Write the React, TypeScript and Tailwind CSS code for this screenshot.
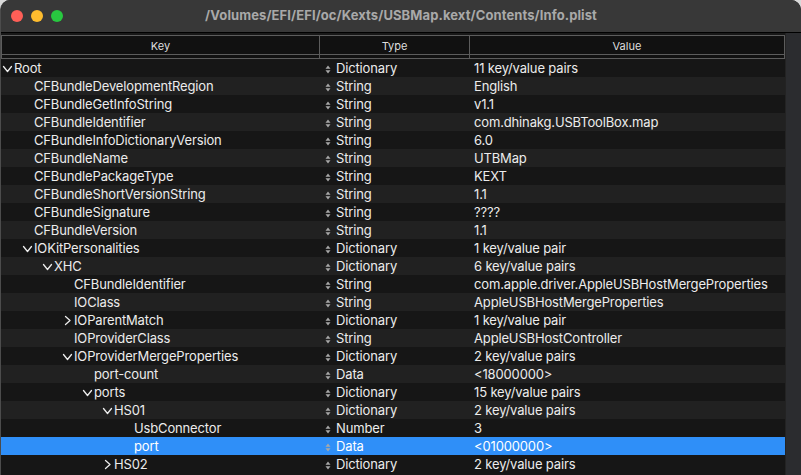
type Row = {
  key: string;
  type: string;
  value: string;
  level: number;
  open?: boolean;
  closed?: boolean;
};

const rows: Row[] = [
  { key: "Root", type: "Dictionary", value: "11 key/value pairs", level: 0, open: true },
  { key: "CFBundleDevelopmentRegion", type: "String", value: "English", level: 1 },
  { key: "CFBundleGetInfoString", type: "String", value: "v1.1", level: 1 },
  { key: "CFBundleIdentifier", type: "String", value: "com.dhinakg.USBToolBox.map", level: 1 },
  { key: "CFBundleInfoDictionaryVersion", type: "String", value: "6.0", level: 1 },
  { key: "CFBundleName", type: "String", value: "UTBMap", level: 1 },
  { key: "CFBundlePackageType", type: "String", value: "KEXT", level: 1 },
  { key: "CFBundleShortVersionString", type: "String", value: "1.1", level: 1 },
  { key: "CFBundleSignature", type: "String", value: "????", level: 1 },
  { key: "CFBundleVersion", type: "String", value: "1.1", level: 1 },
  { key: "IOKitPersonalities", type: "Dictionary", value: "1 key/value pair", level: 1, open: true },
  { key: "XHC", type: "Dictionary", value: "6 key/value pairs", level: 2, open: true },
  { key: "CFBundleIdentifier", type: "String", value: "com.apple.driver.AppleUSBHostMergeProperties", level: 3 },
  { key: "IOClass", type: "String", value: "AppleUSBHostMergeProperties", level: 3 },
  { key: "IOParentMatch", type: "Dictionary", value: "1 key/value pair", level: 3, closed: true },
  { key: "IOProviderClass", type: "String", value: "AppleUSBHostController", level: 3 },
  { key: "IOProviderMergeProperties", type: "Dictionary", value: "2 key/value pairs", level: 3, open: true },
  { key: "port-count", type: "Data", value: "<18000000>", level: 4 },
  { key: "ports", type: "Dictionary", value: "15 key/value pairs", level: 4, open: true },
  { key: "HS01", type: "Dictionary", value: "2 key/value pairs", level: 5, open: true },
  { key: "UsbConnector", type: "Number", value: "3", level: 6 },
  { key: "port", type: "Data", value: "<01000000>", level: 6 },
  { key: "HS02", type: "Dictionary", value: "2 key/value pairs", level: 5, closed: true },
];

// text starts at 14 + 20 * level, minus the 12px disclosure slot and 1px border
const indent = [
  "pl-[1px]",
  "pl-[21px]",
  "pl-[41px]",
  "pl-[61px]",
  "pl-[81px]",
  "pl-[101px]",
  "pl-[121px]",
];

const SELECTED = 21;

function Disclosure({ row }: { row: Row }) {
  if (row.open) {
    return (
      <svg width="12" height="10" viewBox="0 0 12 10" className="shrink-0">
        <path d="M1.5 2.5 L5.5 7.5 L9.5 2.5" fill="none" stroke="#ececec" strokeWidth="1.3" strokeLinecap="round" strokeLinejoin="round" />
      </svg>
    );
  }
  if (row.closed) {
    return (
      <svg width="12" height="12" viewBox="0 0 12 12" className="shrink-0">
        <path d="M3.5 1.5 L8 5.5 L3.5 9.5" fill="none" stroke="#ececec" strokeWidth="1.3" strokeLinecap="round" strokeLinejoin="round" />
      </svg>
    );
  }
  return <span className="w-[12px] shrink-0" />;
}

function SortArrows() {
  return (
    <svg width="6" height="9" viewBox="0 0 6 9" className="shrink-0">
      <path d="M3 0.5 L5.5 3.8 H0.5 Z" fill="#a8a8a8" />
      <path d="M3 8.5 L5.5 5.2 H0.5 Z" fill="#a8a8a8" />
    </svg>
  );
}

function HeaderCell({ label, className }: { label: string; className: string }) {
  return (
    <div className={`flex flex-col ${className}`}>
      <div className="h-[19px] pt-[3px] flex items-center justify-center border-b border-[#5c5c5c]">
        {label}
      </div>
      <div className="flex-1" />
    </div>
  );
}

export default function App() {
  return (
    <div
      className="w-[801px] h-[475px] bg-[#d8d8d8] overflow-hidden"
      style={{ fontFamily: "Inter, 'Liberation Sans', sans-serif" }}>
      <div className="w-full h-full flex flex-col rounded-t-[10px] overflow-hidden bg-[#161616] border-l border-[#4c4c4c]">
        {/* TITLE BAR */}
        <header className="h-[33px] shrink-0 grid grid-cols-[1fr_auto_1fr] items-center bg-[#383838] border-b border-black">
          <div className="flex items-center gap-[8px] pl-[10px]">
            <span className="w-[12px] h-[12px] rounded-full bg-[#fe5f57]" />
            <span className="w-[12px] h-[12px] rounded-full bg-[#febc2e]" />
            <span className="w-[12px] h-[12px] rounded-full bg-[#28c840]" />
          </div>
          <h1 className="text-[13px] font-bold text-[#a9a9a9] tracking-[0.1px]">
            /Volumes/EFI/EFI/oc/Kexts/USBMap.kext/Contents/Info.plist
          </h1>
          <div />
        </header>

        <div className="flex flex-1 min-h-0">
          {/* TABLE */}
          <div className="flex-1 flex flex-col min-w-0">
            {/* COLUMN HEADERS */}
            <div className="h-[26px] shrink-0 pt-[2px] bg-[#181818]">
              <div className="h-[24px] flex text-[11px] text-[#dedede] bg-[#111111] border border-[#5c5c5c]">
                <HeaderCell label="Key" className="w-[318px] border-r border-[#5c5c5c]" />
                <HeaderCell label="Type" className="w-[150px] border-r border-[#5c5c5c]" />
                <HeaderCell label="Value" className="flex-1" />
              </div>
            </div>

            {/* ROWS */}
            <div className="flex-1 flex flex-col text-[13px] tracking-[-0.15px]">
              {rows.map((row, index) => (
                <div
                  key={index}
                  className={`h-[18px] shrink-0 pt-[2px] flex items-center ${
                    index === SELECTED
                      ? "bg-[#2f8ff8] text-white"
                      : index % 2 === 0
                        ? "bg-[#161616] text-[#ececec]"
                        : "bg-[#212121] text-[#ececec]"
                  }`}>
                  <div className={`w-[319px] shrink-0 flex items-center ${indent[row.level]}`}>
                    <Disclosure row={row} />
                    <span className="whitespace-nowrap">{row.key}</span>
                  </div>
                  <div className="w-[150px] shrink-0 flex items-center gap-[5px] pl-[5px]">
                    <SortArrows />
                    <span>{row.type}</span>
                  </div>
                  <div className="flex-1 pl-[4px] whitespace-nowrap overflow-hidden">{row.value}</div>
                </div>
              ))}
              <div className="flex-1 bg-[#161616]" />
            </div>
          </div>

          {/* SCROLLBAR TRACK */}
          <div className="w-[16px] shrink-0 bg-[#2b2c2f] border-l border-[#232323]" />
        </div>
      </div>
    </div>
  );
}
